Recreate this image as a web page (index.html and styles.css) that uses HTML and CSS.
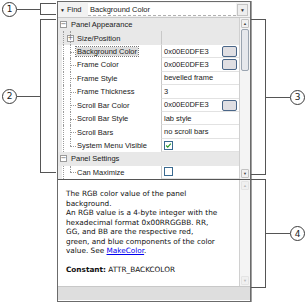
FILE: index.html
```html
<!DOCTYPE html>
<html>
<head>
<meta charset="utf-8">
<link rel="stylesheet" href="styles.css">
</head>
<body>
<div class="stage">
  <div class="side side-left">
    <div class="callout callout-1">
      <span class="num">1</span><span class="lead"></span><span class="bracket"></span>
    </div>
    <div class="callout callout-2">
      <span class="num">2</span><span class="lead"></span><span class="bracket"></span>
    </div>
  </div>

  <div class="panel">
    <div class="findbar">
      <span class="find-label"><span class="tri">&#9660;</span>Find</span>
      <span class="find-input">Background Color</span>
      <span class="find-btn">&#9660;</span>
    </div>

    <div class="grid">
      <div class="rows">
        <div class="row cat first">
          <div class="name"><span class="box">&minus;</span>Panel Appearance</div>
          <div class="val"></div>
        </div>
        <div class="row grp child">
          <div class="name"><span class="box">+</span>Size/Position</div>
          <div class="val"></div>
        </div>
        <div class="row child sel">
          <div class="name"><span class="lbl">Background Color</span></div>
          <div class="val">0x00E0DFE3<span class="swatch"></span></div>
        </div>
        <div class="row child">
          <div class="name"><span class="lbl">Frame Color</span></div>
          <div class="val">0x00E0DFE3<span class="swatch"></span></div>
        </div>
        <div class="row child">
          <div class="name"><span class="lbl">Frame Style</span></div>
          <div class="val">bevelled frame</div>
        </div>
        <div class="row child">
          <div class="name"><span class="lbl">Frame Thickness</span></div>
          <div class="val">3</div>
        </div>
        <div class="row child">
          <div class="name"><span class="lbl">Scroll Bar Color</span></div>
          <div class="val">0x00E0DFE3<span class="swatch"></span></div>
        </div>
        <div class="row child">
          <div class="name"><span class="lbl">Scroll Bar Style</span></div>
          <div class="val">lab style</div>
        </div>
        <div class="row child">
          <div class="name"><span class="lbl">Scroll Bars</span></div>
          <div class="val">no scroll bars</div>
        </div>
        <div class="row child last">
          <div class="name"><span class="lbl">System Menu Visible</span></div>
          <div class="val"><span class="check on"><svg viewBox="0 0 9 9" width="7" height="7"><path d="M1.5 4.5 L3.5 6.5 L7.5 2" fill="none" stroke="#2a9a2a" stroke-width="1.5"/></svg></span></div>
        </div>
        <div class="row cat">
          <div class="name"><span class="box">&minus;</span>Panel Settings</div>
          <div class="val"></div>
        </div>
        <div class="row child last">
          <div class="name"><span class="lbl">Can Maximize</span></div>
          <div class="val"><span class="check"></span></div>
        </div>
      </div>
      <div class="vscroll">
        <span class="arrow up">&#9650;</span>
        <span class="thumb"></span>
        <span class="track"></span>
        <span class="arrow down">&#9660;</span>
      </div>
    </div>

    <div class="desc">
      <div class="desc-text">
        <p>The RGB color value of the panel<br>background.<br>An RGB value is a 4-byte integer with the<br>hexadecimal format 0x00RRGGBB. RR,<br>GG, and BB are the respective red,<br>green, and blue components of the color<br>value. See <a href="#">MakeColor</a>.</p>
        <p><b>Constant:</b> ATTR_BACKCOLOR</p>
      </div>
      <div class="vscroll dim">
        <span class="arrow up">&#9650;</span>
        <span class="track"></span>
        <span class="arrow down">&#9660;</span>
      </div>
    </div>

    <div class="footer"></div>
  </div>

  <div class="side side-right">
    <div class="callout callout-3">
      <span class="bracket"></span><span class="lead"></span><span class="num">3</span>
    </div>
    <div class="callout callout-4">
      <span class="bracket"></span><span class="lead"></span><span class="num">4</span>
    </div>
  </div>
</div>
</body>
</html>
```

FILE: styles.css
```css
* { box-sizing: border-box; }
html, body { margin: 0; padding: 0; background: #fff; }
body { width: 308px; height: 303px; overflow: hidden; font-family: "Liberation Sans", Arial, sans-serif; }

.stage { display: flex; height: 303px; }

/* callouts */
.side { width: 57px; display: flex; flex-direction: column; }
.callout { display: flex; align-items: center; }
.num {
  width: 15px; height: 15px; border: 1px solid #3c3c3c; border-radius: 50%;
  display: flex; align-items: center; justify-content: center;
  font-family: "DejaVu Sans", sans-serif; font-size: 9px; color: #222; flex: none; background: #fff;
}
.lead { height: 1px; background: #555; flex: none; }
.bracket { align-self: stretch; flex: none; border: 1px solid #555; }

.side-left .num { margin-left: 2px; }
.side-left .lead { width: 23px; }
.side-left .bracket { width: 16px; border-right: none; }
.callout-1 { margin-top: 3px; height: 12px; }
.callout-2 { margin-top: 4px; height: 154px; }

.side-right .bracket { width: 15px; border-left: none; }
.side-right .lead { width: 24px; }
.callout-3 { margin-top: 19px; height: 156px; }
.callout-4 { margin-top: 4px; height: 109px; }

/* panel */
.panel {
  width: 194px; height: 301px; margin-top: 1px;
  border: 1px solid #6b6b6b; background: #fff;
  display: flex; flex-direction: column;
  box-shadow: 1px 0 0 #a0a0a0;
}

.findbar {
  height: 16px; display: flex; align-items: center; background: #f2f2f2;
  border-bottom: 1px solid #c8c8c8; font-size: 7.5px; color: #222; padding-left: 2px;
}
.find-label { display: flex; align-items: center; width: 28px; }
.tri { font-size: 5px; margin-right: 2px; }
.find-input {
  flex: 1; height: 13px; background: #fff; border-bottom: 1px dashed #b0b0b0;
  display: flex; align-items: center; padding-left: 2px;
}
.find-btn {
  width: 11px; height: 12px; margin: 0 2px 0 1px; border: 1px solid #c4c4c4; background: #eee;
  font-size: 5px; display: flex; align-items: center; justify-content: center; color: #333;
}

.grid { height: 162px; display: flex; border-bottom: 1px solid #555; }
.rows { flex: 1; display: flex; flex-direction: column; background: #fff; }
.row { height: 13.5px; display: flex; font-size: 7.5px; color: #1a1a1a; }
.row .name {
  width: 103px; display: flex; align-items: center; position: relative;
  padding-left: 15px; background: #fff;
  border-left: 4px solid #ececec;
}
.row .val {
  flex: 1; display: flex; align-items: center; padding-left: 2px;
  border-left: 1px solid #c8c8c8; border-bottom: 1px solid #e2e2e2; position: relative;
}
.row.cat .name, .row.cat .val, .row.grp .name, .row.grp .val { background: #e8e8e8; border-bottom-color: #e8e8e8; }
.row.cat .name { padding-left: 2px; border-left: none; }
.row.cat .val { border-left-color: #e8e8e8; }
.row.grp .name { padding-left: 5px; }
.row.grp .name { border-left-color: #e8e8e8; }

.box {
  width: 7px; height: 7px; border: 1px solid #9a9a9a; background: #fff; font-size: 7px; line-height: 5px;
  display: inline-flex; align-items: center; justify-content: center; color: #555; margin-right: 4px;
  font-family: "DejaVu Sans", sans-serif; position: relative; z-index: 1; flex: none;
}
.row.grp .box { margin-right: 3px; }

/* tree lines */
.row.child .name::before {
  content: ""; position: absolute; left: 1px; top: 0; bottom: 0;
  border-left: 1px dotted #9a9a9a;
}
.row.child .name::after {
  content: ""; position: absolute; left: 8px; top: 0; bottom: 0;
  border-left: 1px dotted #9a9a9a;
}
.row.child.last .name::after { bottom: 50%; }
.row.child .lbl::before {
  content: ""; position: absolute; left: 8px; top: 50%; width: 6px;
  border-top: 1px dotted #9a9a9a;
}

.row.sel .lbl { background: #dcdcdc; outline: 1px dotted #777; padding: 0 1px; margin-left: -1px; }

.swatch {
  position: absolute; left: 60px; top: 1px; width: 15px; height: 11px; border: 1px solid #4a6688;
  border-radius: 2px; background: #e0dfe3;
}
.check { width: 9px; height: 9px; border: 1px solid #3a6a90; background: #fff; display: inline-flex; align-items: center; justify-content: center; }
.check svg { display: block; }

.vscroll {
  width: 11px; display: flex; flex-direction: column; background: #f4f4f4;
  border-left: 1px solid #d0d0d0; position: relative;
}
.vscroll .arrow {
  height: 9px; margin: 1px; font-size: 4px; color: #444; display: flex; align-items: center; justify-content: center;
  border: 1px solid #c2c2c2; background: #f0f0f0; border-radius: 1px;
}
.vscroll .thumb { height: 42px; margin: 0 1px; border: 1px solid #9aa4b0; border-radius: 2px; background: #e6e8ec; }
.vscroll .track { flex: 1; }
.vscroll.dim .arrow { color: #bbb; border-color: #e4e4e4; }

.desc { height: 106px; display: flex; }
.desc-text {
  flex: 1; padding: 9px 0 0 8px; font-family: "DejaVu Sans", Verdana, sans-serif; font-size: 7.3px;
  line-height: 9.5px; color: #111; white-space: nowrap;
}
.desc-text p { margin: 0 0 9.5px 0; }
.desc-text a { color: #0000ee; }
.desc-text b { font-weight: bold; }

.footer { height: 14px; background: #dedede; border-top: 1px solid #c8c8c8; }
```
